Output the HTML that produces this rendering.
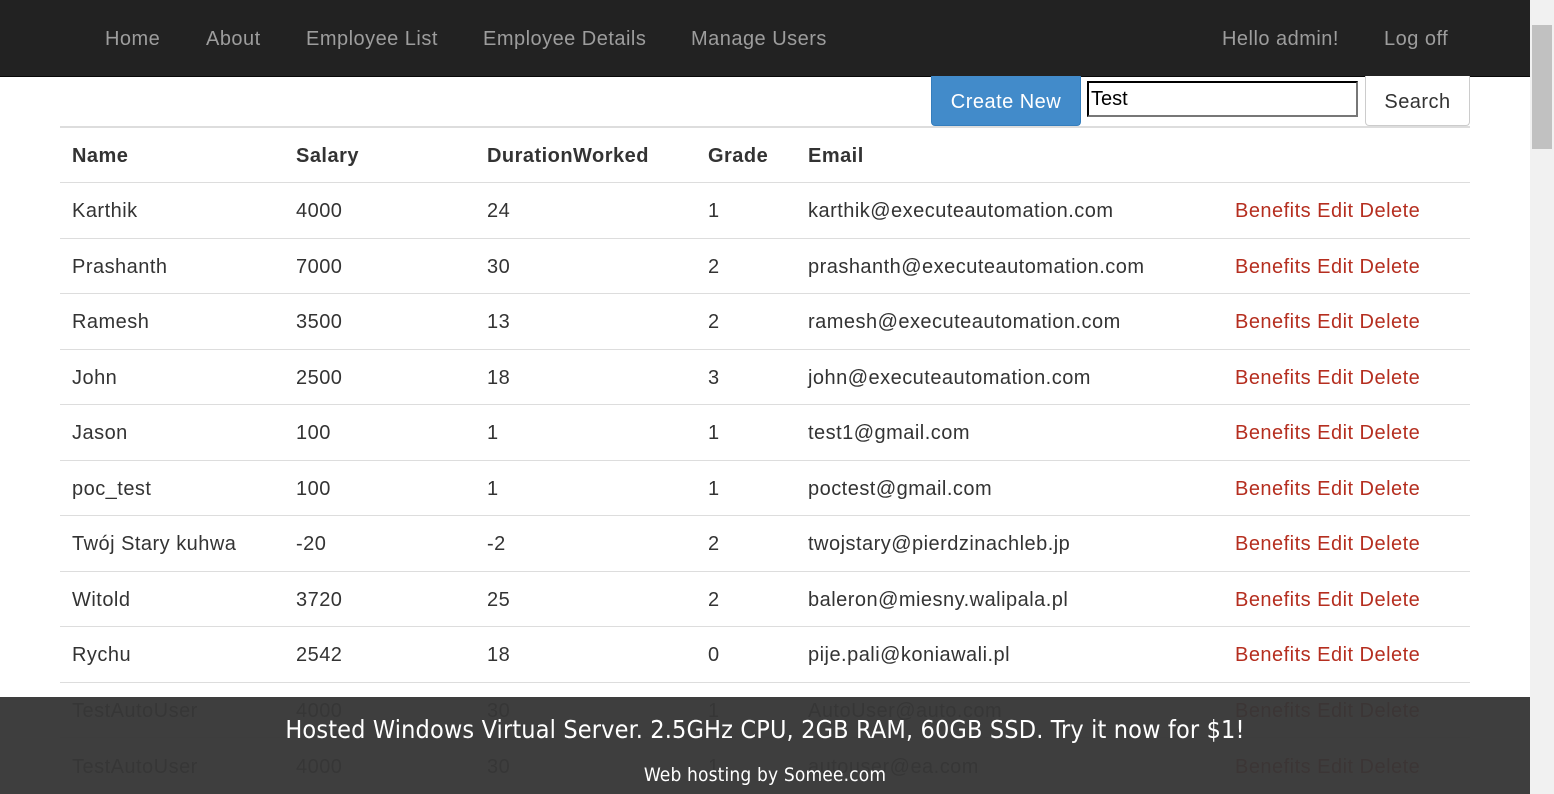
<!DOCTYPE html>
<html><head><meta charset="utf-8"><style>
*{box-sizing:border-box;margin:0;padding:0}
body{width:1554px;height:794px;overflow:hidden;font-family:"Liberation Sans",Arial,sans-serif;color:#333;background:#fff;position:relative;letter-spacing:0.48px}
.nav{position:absolute;left:0;top:0;width:1530px;height:77px;background:#222;border-bottom:1px solid #080808}
.nav a{position:absolute;top:28px;color:#9d9d9d;font-size:20px;text-decoration:none;white-space:nowrap}
.sb{position:absolute;right:0;top:0;width:24px;height:794px;background:#f1f1f1}
.sb .th{position:absolute;left:2px;top:25px;width:20px;height:124px;background:#c1c1c1}
.btn{position:absolute;top:76px;height:50px;font-size:20px;line-height:52px;text-align:center;border-radius:4px}
table{position:absolute;left:60px;top:126px;width:1410px;border-collapse:collapse;font-size:20px}
td,th{height:55.5px;padding:3px 12px 0;text-align:left;border-top:1px solid #ddd;white-space:nowrap}
thead th{border-top:2px solid #ddd;border-bottom:1px solid #ddd}
td.a{color:#b52e1f}
.ov{position:absolute;left:0;top:697px;width:1530px;height:97px;background:rgba(54,54,54,0.96);color:#fff;text-align:center;font-family:"DejaVu Sans Condensed","Liberation Sans Narrow","Liberation Sans",sans-serif;letter-spacing:0.15px}
</style></head><body>
<div class="nav">
<a style="left:105px">Home</a><a style="left:206px">About</a><a style="left:306px">Employee List</a><a style="left:483px">Employee Details</a><a style="left:691px">Manage Users</a><a style="left:1222px">Hello admin!</a><a style="left:1384px">Log off</a>
</div>
<div class="btn" style="left:931px;width:150px;background:#428bca;color:#fff;border:1px solid #357ebd;border-top:0;border-radius:0 0 4px 4px">Create New</div>
<div style="position:absolute;left:1087px;top:81px;width:271px;height:36px;border:2px inset #767676;border-color:#222 #777 #777 #222;font-size:20px;line-height:32px;padding-left:2px;color:#000;letter-spacing:0">Test</div>
<div class="btn" style="left:1365px;width:105px;background:#fff;border:1px solid #ccc;border-top:0;border-radius:0 0 4px 4px;color:#333">Search</div>
<table>
<colgroup><col style="width:224px"><col style="width:191px"><col style="width:221px"><col style="width:100px"><col style="width:427px"><col></colgroup>
<thead><tr><th>Name</th><th>Salary</th><th>DurationWorked</th><th>Grade</th><th>Email</th><th></th></tr></thead>
<tbody>
<tr><td>Karthik</td><td>4000</td><td>24</td><td>1</td><td>karthik@executeautomation.com</td><td class="a">Benefits Edit Delete</td></tr>
<tr><td>Prashanth</td><td>7000</td><td>30</td><td>2</td><td>prashanth@executeautomation.com</td><td class="a">Benefits Edit Delete</td></tr>
<tr><td>Ramesh</td><td>3500</td><td>13</td><td>2</td><td>ramesh@executeautomation.com</td><td class="a">Benefits Edit Delete</td></tr>
<tr><td>John</td><td>2500</td><td>18</td><td>3</td><td>john@executeautomation.com</td><td class="a">Benefits Edit Delete</td></tr>
<tr><td>Jason</td><td>100</td><td>1</td><td>1</td><td>test1@gmail.com</td><td class="a">Benefits Edit Delete</td></tr>
<tr><td>poc_test</td><td>100</td><td>1</td><td>1</td><td>poctest@gmail.com</td><td class="a">Benefits Edit Delete</td></tr>
<tr><td>Twój Stary kuhwa</td><td>-20</td><td>-2</td><td>2</td><td>twojstary@pierdzinachleb.jp</td><td class="a">Benefits Edit Delete</td></tr>
<tr><td>Witold</td><td>3720</td><td>25</td><td>2</td><td>baleron@miesny.walipala.pl</td><td class="a">Benefits Edit Delete</td></tr>
<tr><td>Rychu</td><td>2542</td><td>18</td><td>0</td><td>pije.pali@koniawali.pl</td><td class="a">Benefits Edit Delete</td></tr>
<tr><td>TestAutoUser</td><td>4000</td><td>30</td><td>1</td><td>AutoUser@auto.com</td><td class="a">Benefits Edit Delete</td></tr>
<tr><td>TestAutoUser</td><td>4000</td><td>30</td><td>1</td><td>autouser@ea.com</td><td class="a">Benefits Edit Delete</td></tr>
</tbody></table>
<div class="ov">
<div style="position:absolute;left:0;right:0;top:18px;font-size:25px">Hosted Windows Virtual Server. 2.5GHz CPU, 2GB RAM, 60GB SSD. Try it now for $1!</div>
<div style="position:absolute;left:0;right:0;top:67px;font-size:19px">Web hosting by Somee.com</div>
</div>
<div class="sb"><div class="th"></div></div>
</body></html>
